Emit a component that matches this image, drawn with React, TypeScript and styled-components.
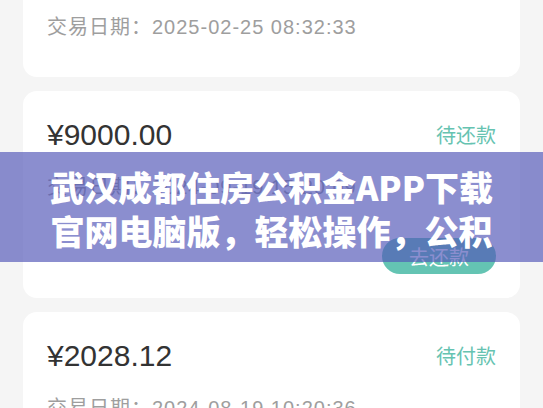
import React from "react";
import styled, { createGlobalStyle } from "styled-components";

const Global = createGlobalStyle`
  html, body {
    margin: 0;
    padding: 0;
    background: #f5f5f5;
    overflow: hidden;
  }
  body {
    font-family: "Liberation Sans", "Noto Sans CJK SC", sans-serif;
  }
`;

const Viewport = styled.div`
  position: relative;
  width: 543px;
  height: 408px;
  overflow: hidden;
  background: #f5f5f5;
`;

const List = styled.div`
  display: flex;
  flex-direction: column;
  gap: 14px;
  padding: 0 23px;
  margin-top: -69px;
`;

const Card = styled.div<{ $hasAction: boolean }>`
  background: #ffffff;
  border-radius: 14px;
  padding: 24px 24px ${(p) => (p.$hasAction ? "24px" : "36px")};
  display: flex;
  flex-direction: column;
`;

const TopRow = styled.div`
  display: flex;
  align-items: center;
  justify-content: space-between;
  height: 40px;
`;

const Amount = styled.span`
  font-family: "Liberation Sans", "Noto Sans CJK SC", sans-serif;
  font-size: 30px;
  color: #333333;
  line-height: 40px;
`;

const Status = styled.span`
  font-family: "Noto Sans CJK SC", sans-serif;
  font-size: 20px;
  color: #66c3b1;
  line-height: 28px;
`;

const DateRow = styled.div`
  margin-top: 18px;
  font-family: "Liberation Sans", "Noto Sans CJK SC", sans-serif;
  font-size: 20px;
  line-height: 28px;
  color: #9e9e9e;
  letter-spacing: 1px;
`;

const Actions = styled.div`
  margin-top: 37px;
  display: flex;
  justify-content: flex-end;
`;

const PayButton = styled.button`
  width: 114px;
  height: 36px;
  border: none;
  border-radius: 18px;
  background: #64c4b3;
  color: #ffffff;
  font-family: "Noto Sans CJK SC", sans-serif;
  font-size: 20px;
  padding: 0;
  cursor: pointer;
`;

const Banner = styled.div`
  position: absolute;
  left: 0;
  right: 0;
  top: 152px;
  height: 110px;
  box-sizing: border-box;
  padding-top: 13px;
  background: rgba(82, 87, 184, 0.67);
  display: flex;
  flex-direction: column;
  align-items: center;
`;

const TitleLine = styled.div`
  font-family: "Noto Sans CJK SC", sans-serif;
  font-weight: 900;
  font-size: 34px;
  line-height: 44px;
  color: #ffffff;
  white-space: nowrap;
`;

type Order = {
  amount: string;
  status: string;
  date: string;
  action?: string;
};

const orders: Order[] = [
  { amount: "¥5000.00", status: "已完成", date: "2025-02-25 08:32:33" },
  { amount: "¥9000.00", status: "待还款", date: "2024-09-19 15:20:09", action: "去还款" },
  { amount: "¥2028.12", status: "待付款", date: "2024-08-19 10:20:36", action: "去付款" },
];

export default function App() {
  return (
    <>
      <Global />
      <Viewport>
        <List>
          {orders.map((o, i) => (
            <Card key={i} $hasAction={!!o.action}>
              <TopRow>
                <Amount>{o.amount}</Amount>
                <Status>{o.status}</Status>
              </TopRow>
              <DateRow>交易日期：{o.date}</DateRow>
              {o.action && (
                <Actions>
                  <PayButton>{o.action}</PayButton>
                </Actions>
              )}
            </Card>
          ))}
        </List>
        <Banner>
          <TitleLine>武汉成都住房公积金APP下载</TitleLine>
          <TitleLine>官网电脑版，轻松操作，公积</TitleLine>
        </Banner>
      </Viewport>
    </>
  );
}
